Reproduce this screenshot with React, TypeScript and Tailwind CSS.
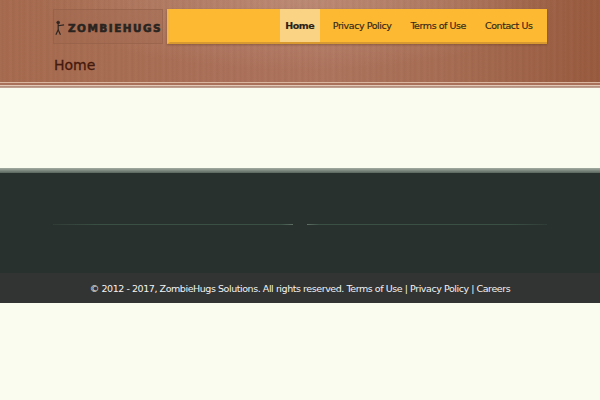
export default function App() {
  const wood =
    "bg-[#a5684c] bg-[repeating-linear-gradient(90deg,rgba(255,255,255,0.02)_0px,rgba(0,0,0,0.025)_3px,rgba(255,255,255,0.015)_4px,rgba(0,0,0,0.015)_7px,rgba(255,255,255,0.025)_11px,rgba(0,0,0,0.025)_13px,rgba(255,255,255,0.02)_17px),radial-gradient(ellipse_260px_70px_at_300px_0px,rgba(205,165,145,0.45),rgba(205,165,145,0)),linear-gradient(90deg,#a66a4e_0%,#a86d52_20%,#ab7059_40%,#ad735c_55%,#a66c52_75%,#985a3e_100%)]";
  return (
    <div className="min-h-[400px] bg-[#fafcf0] font-['DejaVu_Sans',sans-serif]">
      <header className={wood}>
        <div className="ml-[53px] w-[494px] h-[82px] flex flex-col">
          <div className="flex pt-[9px]">
            <div className="w-[110px] h-[35px] border border-[#8f5c46]/50 bg-[#a06850]/40 flex items-center pl-[1px] gap-[3px]">
              <svg width="10" height="16" viewBox="0 0 11 16" className="shrink-0 mt-[2px]">
                <g stroke="#2f2622" fill="none">
                  <circle cx="3.5" cy="2" r="1.5" fill="#2f2622" />
                  <path d="M3.5 4v6M3.5 5.5L10 4.5M3.5 10L1 15.5M3.5 10L6 15.5" strokeWidth="1.3" />
                </g>
              </svg>
              <span className="mt-[4px] text-[10.5px] leading-none font-bold text-[#2a2420] tracking-[1.45px] [-webkit-text-stroke:0.6px_#2a2420] whitespace-nowrap">
                ZOMBIEHUGS
              </span>
            </div>
            <nav className="ml-[4px] w-[380px] h-[35px] flex justify-end bg-[#fcb931] border-l-[3px] border-l-[#f2b546] border-b-2 border-b-[#d99a30] text-[9.5px] tracking-[-0.44px] text-[#33281a] [-webkit-text-stroke:0.15px_#33281a] shadow-[0_1px_2px_rgba(90,50,20,0.4)]">
              <a className="w-[40px] h-[33px] pt-[2px] flex items-center justify-center mr-[3.5px] bg-[#fbd384] font-bold text-[#2a2218]">Home</a>
              <a className="px-[9.5px] h-[33px] pt-[2px] flex items-center whitespace-nowrap">Privacy Policy</a>
              <a className="px-[9.5px] h-[33px] pt-[2px] flex items-center whitespace-nowrap">Terms of Use</a>
              <a className="pl-[9.5px] pr-[14.5px] h-[33px] pt-[2px] flex items-center whitespace-nowrap">Contact Us</a>
            </nav>
          </div>
          <h1 className="mt-[11px] pl-px text-[14px] leading-[20px] font-normal text-[#45190c] [-webkit-text-stroke:0.3px_#45190c]">Home</h1>
        </div>
        <div className="h-[6px] bg-[linear-gradient(180deg,#d9b49e_0%,#d9b49e_17%,#a9705a_17%,#a9705a_50%,#e3c9b8_50%,#e3c9b8_67%,#b08a78_67%,#c4a696_100%)]" />
      </header>
      <main className="h-[80px]" />
      <div className="h-[5px] bg-[linear-gradient(180deg,#a3aca0,#59665f)]" />
      <section className="h-[100px] bg-[#28312d] pt-[51px]">
        <div className="ml-[53px] w-[494px] flex items-center">
          <div className="h-px w-[240px] bg-[linear-gradient(90deg,#303c36,#3a5045_20%,#3a5045_95%,#5f6f66)]" />
          <div className="w-[14px]" />
          <div className="h-px flex-1 bg-[linear-gradient(90deg,#5f6f66,#3a5045_5%,#3a5045_85%,#303c36)]" />
        </div>
      </section>
      <footer className="h-[30px] pt-[2px] bg-[#323433] flex items-center justify-center text-[9.5px] tracking-[-0.44px] text-[#f2f2f2] whitespace-nowrap">
        © 2012 - 2017, ZombieHugs Solutions. All rights reserved. Terms of Use | Privacy Policy | Careers
      </footer>
    </div>
  );
}
